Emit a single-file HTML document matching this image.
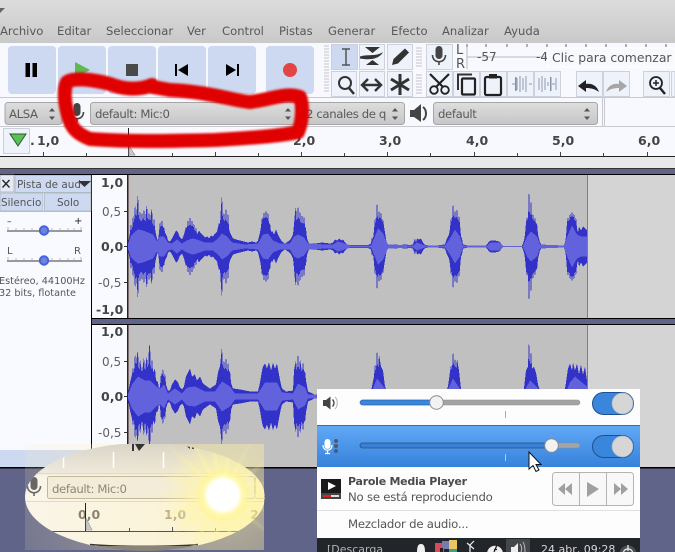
<!DOCTYPE html>
<html><head><meta charset="utf-8"><title>Audacity</title>
<style>
html,body{margin:0;padding:0;background:#fff;width:675px;height:552px;overflow:hidden}
svg{display:block}
#root{position:absolute;left:0;top:0}
text{font-family:"DejaVu Sans","Liberation Sans",sans-serif;font-size:12px;fill:#555;white-space:pre}
.n{font-size:11.6px;fill:#585858}
.b{font-weight:bold;fill:#444;font-size:12.5px}
.s{fill:#606060;font-size:12px}
.m{fill:#5a5a5a;font-size:11.700px;letter-spacing:-.38px}
.p{fill:#555;font-size:11.700px;letter-spacing:-.22px}
</style></head><body>
<svg id="root" width="675" height="552" viewBox="0 0 675 552" xmlns="http://www.w3.org/2000/svg">
<defs>
<linearGradient id="top" x1="0" y1="0" x2="0" y2="1"><stop offset="0" stop-color="#dcdcdc"/><stop offset="1" stop-color="#c9c9c9"/></linearGradient>
<linearGradient id="cb" x1="0" y1="0" x2="0" y2="1"><stop offset="0" stop-color="#dedede"/><stop offset="1" stop-color="#c6c6c6"/></linearGradient>
<linearGradient id="sel" x1="0" y1="0" x2="0" y2="1"><stop offset="0" stop-color="#62a8f6"/><stop offset="1" stop-color="#3683dc"/></linearGradient>
<linearGradient id="cream" x1="0" y1="0" x2="1" y2="0"><stop offset="0" stop-color="#faf5e8"/><stop offset=".6" stop-color="#fbf3d8"/><stop offset="1" stop-color="#fdf3b8"/></linearGradient>
<linearGradient id="creamtop" x1="0" y1="0" x2="0" y2="1"><stop offset="0" stop-color="#b8b4b4" stop-opacity=".5"/><stop offset=".28" stop-color="#cac6c0" stop-opacity=".25"/><stop offset=".32" stop-color="#fff" stop-opacity="0"/></linearGradient>
<radialGradient id="tint" gradientUnits="userSpaceOnUse" cx="223" cy="495" r="210"><stop offset="0" stop-color="#fff0a0" stop-opacity=".6"/><stop offset=".5" stop-color="#fff0b0" stop-opacity=".3"/><stop offset="1" stop-color="#f8e8c0" stop-opacity=".14"/></radialGradient>
<radialGradient id="ray" gradientUnits="userSpaceOnUse" cx="223" cy="495" r="90"><stop offset="0" stop-color="#fffbd0"/><stop offset=".45" stop-color="#fff4a0" stop-opacity=".55"/><stop offset="1" stop-color="#fff4a0" stop-opacity="0"/></radialGradient>
<radialGradient id="glow" gradientUnits="userSpaceOnUse" cx="223" cy="495" r="62"><stop offset="0" stop-color="#fff7a0" stop-opacity=".85"/><stop offset=".55" stop-color="#fff5a8" stop-opacity=".45"/><stop offset="1" stop-color="#fff5b8" stop-opacity="0"/></radialGradient>
<radialGradient id="core" gradientUnits="userSpaceOnUse" cx="223" cy="495" r="28"><stop offset="0" stop-color="#fff"/><stop offset=".55" stop-color="#fff"/><stop offset=".72" stop-color="#fff9a8" stop-opacity=".85"/><stop offset="1" stop-color="#ffef80" stop-opacity="0"/></radialGradient>
<filter id="bl" x="-10%" y="-10%" width="120%" height="120%"><feGaussianBlur stdDeviation="1.200"/></filter>
<filter id="bl2" x="-20%" y="-20%" width="140%" height="140%"><feGaussianBlur stdDeviation="1.100"/></filter>
<clipPath id="ell"><ellipse cx="145" cy="497" rx="120" ry="54"/></clipPath>
<clipPath id="box"><rect x="25" y="444" width="239" height="106"/></clipPath>
<polygon id="r" points="223,492.500 223,497.500 318,495" fill="url(#ray)"/>
<polygon id="r2" points="223,493.500 223,496.500 282,495" fill="url(#ray)"/>
<path id="d1" d="M128 -3 130 -14 131 -24 132 -15 133 -33 134 -22 135 -44 136 -28 137 -40 138 -54 139 -24 140 -38 141 -22 142 -36 143 -24 144 -40 145 -22 146 -36 147 -42 148 -24 149 -36 150 -24 151 -34 152 -38 153 -18 154 -30 155 -18 156 -12 157 -8 158 -6 159 -14 160 -26 161 -18 162 -28 163 -18 164 -20 165 -14 166 -12 167 -10 168 -6 170 -5 172 -8 174 -12 176 -16 178 -14 180 -9 182 -7 184 -12 186 -20 187 -18 188 -28 189 -18 190 -32 191 -18 192 -28 193 -18 194 -24 195 -14 196 -20 197 -12 199 -16 201 -13 203 -11 205 -9 207 -10 209 -8 211 -11 213 -10 215 -13 217 -15 219 -24 220 -22 221 -40 222 -52 223 -24 224 -36 225 -22 226 -42 227 -20 228 -36 229 -18 230 -14 231 -12 233 -8 236 -7 240 -6 244 -5 248 -4 252 -5 256 -4 258 -6 260 -14 261 -20 262 -30 263 -26 264 -36 265 -26 266 -38 267 -26 268 -36 269 -22 270 -24 271 -14 272 -16 274 -12 276 -17 278 -12 280 -8 282 -5 285 -3 288 -5 291 -8 293 -12 294 -22 295 -34 296 -40 297 -22 298 -44 299 -24 300 -38 301 -20 302 -34 303 -20 304 -32 305 -20 306 -18 307 -8 309 -3 315 -3 322 -4 330 -3 333 -4 335 -7 337 -6 339 -8 341 -6 343 -7 345 -4 347 -2 350 -1.500 368 -1.500 371 -3 372 -10 373 -7 374 -16 375 -30 376 -22 377 -48 378 -24 379 -38 380 -26 381 -36 382 -24 383 -28 384 -20 385 -14 386 -8 387 -3 389 -1 395 -2 400 -1.500 405 -2 410 -1.500 413 -2 415 -8 416 -4 417 -8 419 -7 421 -8 423 -4 425 -1.500 430 -1 437 -1 440 -1.500 445 -2 447 -8 449 -12 450 -18 451 -30 452 -24 453 -46 454 -26 455 -38 456 -26 457 -40 458 -24 459 -32 460 -22 461 -10 462 -8 463 -2 470 -.7 485 -.7 487 -2 489 -5 491 -6 495 -6 499 -5 501 -3 503 -.7 522 -.7 524 -6 525 -12 526 -24 527 -30 528 -26 529 -61 530 -26 531 -50 532 -26 533 -34 534 -24 535 -30 536 -22 537 -24 538 -12 540 -4 542 -1 564 -1 565 -4 566 -10 567 -24 568 -30 569 -24 570 -34 571 -28 572 -36 573 -28 574 -34 575 -24 576 -30 577 -18 578 -14 579 -20 581 -16 583 -20 585 -18 587 -16 587 0 128 0Z"/>
<path id="l1" d="M128 -2 131 -11 134 -14 138 -17 143 -16 148 -14 153 -12 157 -5 160 -10 164 -10 168 -4 172 -3 177 -7 182 -3 187 -6 192 -8 197 -7 205 -4 213 -4 218 -8 222 -13 227 -10 232 -4 245 -2 258 -3 263 -12 268 -13 273 -6 280 -3 290 -3 294 -10 298 -12 304 -9 308 -3 325 -2 333 -2 338 -5 345 -3 350 -1 371 -1 374 -8 378 -18 383 -13 388 -2 413 -1 417 -4 425 -1 445 -1 450 -8 455 -17 460 -10 463 -1 487 -1 490 -4 500 -4 503 -.5 523 -.5 527 -10 531 -15 537 -10 540 -2 564 -1 568 -12 572 -21 577 -12 581 -10 587 -10 587 0 128 0Z"/>
<path id="d2" d="M128 -3 130 -14 132 -22 133 -30 134 -22 135 -45 136 -30 137 -42 138 -45 139 -24 140 -38 142 -24 144 -40 145 -24 146 -36 147 -40 148 -26 149 -50 150 -52 151 -24 152 -40 153 -24 155 -28 156 -16 158 -14 159 -8 160 -10 161 -24 162 -20 163 -29 164 -18 165 -24 166 -12 168 -6 170 -6 172 -12 175 -17 178 -14 180 -9 182 -7 184 -10 186 -20 188 -24 190 -28 192 -20 195 -22 197 -16 200 -20 203 -13 207 -10 210 -8 213 -10 216 -12 218 -24 220 -30 221 -40 222 -50 223 -26 224 -38 225 -24 226 -42 227 -22 228 -36 229 -24 230 -26 231 -14 233 -8 240 -7 250 -5 258 -5 260 -14 262 -26 263 -30 265 -33 267 -28 269 -34 271 -26 273 -34 275 -28 277 -33 279 -22 281 -12 282 -8 286 -5 293 -6 294 -26 296 -36 297 -24 298 -46 299 -24 300 -38 302 -24 303 -36 304 -24 305 -26 306 -16 308 -5 317 -1 330 -2 345 -3 370 -2 372 -10 374 -20 375 -34 376 -24 377 -50 378 -26 379 -42 381 -30 383 -26 385 -10 388 -2 445 -2 448 -10 451 -32 452 -26 453 -48 454 -28 455 -40 456 -26 457 -38 459 -26 461 -8 464 -2 522 -2 524 -8 526 -26 528 -30 529 -59 530 -28 531 -48 532 -28 534 -30 536 -24 538 -12 541 -2 564 -2 566 -14 568 -28 570 -33 572 -26 573 -34 575 -26 577 -33 579 -22 581 -32 583 -22 585 -30 587 -16 587 0 128 0Z"/>
<path id="l2" d="M128 -2 132 -12 138 -20 145 -16 150 -16 156 -10 160 -8 164 -12 168 -3 175 -8 182 -3 187 -9 195 -10 205 -5 215 -5 222 -15 230 -10 235 -3 258 -3 265 -14 277 -14 282 -4 293 -3 298 -13 305 -9 308 -2 370 -1 377 -18 385 -8 388 -1 445 -1 453 -18 461 -6 464 -1 522 -1 530 -16 538 -8 541 -1 564 -1 570 -14 575 -20 582 -14 587 -10 587 0 128 0Z"/>
<g id="ud"><path d="M0 -2.500 3 -6 6 -2.500Z M0 2.500 3 6 6 2.500Z" fill="#555"/></g>
<g id="mic"><rect x="-3.500" y="-10" width="7" height="13" rx="3.500" fill="#444"/><path d="M-6.500 -1 C-6.500 8 6.500 8 6.500 -1" fill="none" stroke="#444" stroke-width="1.600"/><rect x="-.8" y="5" width="1.600" height="4" fill="#444"/></g>
<g id="tog"><rect x=".5" y=".5" width="41" height="22" rx="11" fill="#3a86dc" stroke="#1c5190"/><circle cx="30.500" cy="11.500" r="10.500" fill="#d6d6d6" stroke="#a8b4c4" stroke-width=".7"/></g>
</defs>

<!-- window background -->
<rect width="675" height="552" fill="#f8f9ff"/>
<rect width="675" height="43" fill="url(#top)"/>
<path d="M0 8 5 8 0 13Z" fill="#666"/>
<!-- menu -->
<text class="n" x="0" y="35">Archivo</text><text class="n" x="57" y="35">Editar</text><text class="n" x="106" y="35">Seleccionar</text><text class="n" x="187" y="35">Ver</text><text class="n" x="222" y="35">Control</text><text class="n" x="279" y="35">Pistas</text><text class="n" x="328" y="35">Generar</text><text class="n" x="391" y="35">Efecto</text><text class="n" x="442" y="35">Analizar</text><text class="n" x="504" y="35">Ayuda</text>

<!-- transport -->
<g fill="#ccd9f0">
<rect x="8" y="46" width="48" height="48" rx="4"/><rect x="58" y="46" width="48" height="48" rx="4"/><rect x="108" y="46" width="48" height="48" rx="4"/><rect x="158" y="46" width="48" height="48" rx="4"/><rect x="208" y="46" width="48" height="48" rx="4"/><rect x="266" y="46" width="48" height="48" rx="4"/>
</g>
<rect x="25.500" y="63" width="4.500" height="14" fill="#000"/><rect x="32.500" y="63" width="4.500" height="14" fill="#000"/>
<path d="M75 62 90 70 75 78Z" fill="#5fb94f"/>
<rect x="126" y="64" width="12" height="12" fill="#4a4a4a"/>
<rect x="175" y="64" width="2" height="12" fill="#000"/><path d="M188 64 178 70 188 76Z" fill="#000"/>
<path d="M226 64 236 70 226 76Z" fill="#000"/><rect x="237" y="64" width="2" height="12" fill="#000"/>
<circle cx="290" cy="70" r="7" fill="#e14545"/>
<path d="M324 46h5M324 49h5M324 52h5M324 55h5M324 58h5M324 61h5M324 64h5M324 67h5M324 70h5M324 73h5M324 76h5M324 79h5M324 82h5M324 85h5M324 88h5M324 91h5" stroke="#c4c4c8"/>

<!-- tool buttons -->
<g fill="#eef2fb" stroke="#c4c8d2" stroke-width=".8">
<rect x="331.500" y="44.500" width="26" height="25" fill="#ccd9f0"/><rect x="359.500" y="44.500" width="25" height="25"/><rect x="387.500" y="44.500" width="25" height="25"/><rect x="426.500" y="44.500" width="26" height="25"/>
<rect x="331.500" y="71.500" width="25" height="25"/><rect x="359.500" y="71.500" width="25" height="25"/><rect x="387.500" y="71.500" width="25" height="25"/><rect x="426.500" y="71.500" width="26" height="25"/><rect x="453.500" y="71.500" width="26" height="25"/><rect x="480.500" y="71.500" width="26" height="25"/><rect x="507.500" y="71.500" width="26" height="25"/><rect x="534.500" y="71.500" width="26" height="25"/><rect x="576.500" y="71.500" width="26" height="25"/><rect x="603.500" y="71.500" width="26" height="25"/><rect x="643.500" y="71.500" width="26" height="25"/><rect x="671.500" y="71.500" width="3.500" height="25"/>
</g>
<path d="M416 48h6M416 51h6M416 54h6M416 57h6M416 60h6M416 63h6M416 66h6M416 75h6M416 78h6M416 81h6M416 84h6M416 87h6M416 90h6M416 93h6" stroke="#c4c4c8"/>
<!-- I tool -->
<path d="M342 49h8M342 65h8M346 49v16" stroke="#555" stroke-width="1.500" fill="none"/>
<!-- envelope -->
<path d="M365 47 380 47 372.500 53Z M366 65 379 65 372.500 60Z" fill="#333"/><path d="M360 56.500C368 54 376 57 383 52C379 60 368 60 360 58.500Z" fill="#333"/>
<!-- pencil -->
<path d="M392 65 393.500 59 405 48.500 409 52.500 398 63.500Z" fill="#333"/>
<!-- mic -->
<use href="#mic" transform="translate(439,56)"/>
<!-- magnifier -->
<circle cx="345" cy="83" r="6" fill="none" stroke="#333" stroke-width="2"/><path d="M349 88 354 94" stroke="#333" stroke-width="2.500"/>
<!-- arrows -->
<path d="M362 85H381" stroke="#333" stroke-width="2.500"/><path d="M368 79 362 85 368 91M375 79 381 85 375 91" stroke="#333" stroke-width="2.400" fill="none"/>
<!-- star -->
<path d="M400 74V95M391 79 409 90M391 90 409 79" stroke="#333" stroke-width="3"/>
<!-- scissors -->
<circle cx="434" cy="90" r="3.800" fill="none" stroke="#222" stroke-width="1.800"/><circle cx="445" cy="90" r="3.800" fill="none" stroke="#222" stroke-width="1.800"/><path d="M436 87 449 74M443 87 430 74" stroke="#222" stroke-width="2.200"/>
<!-- copy -->
<path d="M458 90V74.500H472" fill="none" stroke="#333" stroke-width="2"/><rect x="462" y="78.500" width="13" height="16" rx="1" fill="none" stroke="#222" stroke-width="2.200"/>
<!-- paste -->
<rect x="485" y="77" width="16" height="18" rx="1.500" fill="none" stroke="#222" stroke-width="2.200"/><rect x="489" y="74" width="8" height="4.500" fill="#222"/>
<!-- trim / silence -->
<path d="M512 84H516M529 84H532M517 78v12M520 76v16M523 78v12M526 76v16" stroke="#a0a8bc" stroke-width="1.200" fill="none"/><rect x="515" y="77" width="1.500" height="14" fill="#8a92a8"/>
<path d="M539 78v12M542 76v16M545 78v12M548 82v4M552 84H555M556 78v12" stroke="#a0a8bc" stroke-width="1.200" fill="none"/><rect x="550" y="77" width="1.500" height="14" fill="#8a92a8"/>
<!-- undo/redo -->
<path d="M578 86 586 80V84C592 83 597 86 599 92C595 89 591 88 586 88V92Z" fill="#222"/>
<path d="M578 86 586 80V84C592 83 597 86 599 92C595 89 591 88 586 88V92Z" fill="#a6a6a6" transform="translate(1205,0) scale(-1,1)"/>
<!-- zoom in -->
<circle cx="656" cy="83" r="6" fill="none" stroke="#222" stroke-width="1.800"/><path d="M653 83H659M656 80V86" stroke="#222" stroke-width="1.500"/><path d="M660 88 665 94" stroke="#222" stroke-width="2.400"/>

<!-- meter -->
<text x="456" y="54" style="font-size:13px">L</text><text x="456" y="68" style="font-size:13px">R</text>
<path d="M467 44V69M467 57H549" stroke="#bbb" fill="none"/><path d="M467 44V47M486 44V47M507 44V47M527 44V47M547 44V47M566 44V47M586 44V47M606 44V47M626 44V47M646 44V47M666 44V47" stroke="#666"/>
<text x="477" y="61" style="font-size:12px">-57</text><text x="536" y="61">-4</text>
<rect x="547.500" y="48" width="127.500" height="19" fill="#f8f9ff" stroke="#fff"/>
<text x="552" y="62" style="font-size:12.400px">Clic para comenzar</text>

<!-- device toolbar -->
<path d="M0 97.500H675M0 126.500H675" stroke="#c8c8d0"/>
<g fill="url(#cb)" stroke="#a6a6a6"><rect x="5" y="102.500" width="57" height="22" rx="3"/><rect x="90.500" y="102.500" width="206" height="22" rx="3"/><rect x="304.500" y="102.500" width="100" height="22" rx="3"/><rect x="433.500" y="102.500" width="164" height="22" rx="3"/></g>
<text x="9" y="118" class="m">ALSA</text><text x="95" y="118" class="m">default: Mic:0</text>
<text x="306" y="118" class="m">2 canales de q</text><text x="438" y="118" class="m">default</text>
<use href="#ud" transform="translate(49,114)"/><use href="#ud" transform="translate(285,114)"/><use href="#ud" transform="translate(392,114)"/><use href="#ud" transform="translate(584,114)"/>
<use href="#mic" transform="translate(77,113)"/>
<path d="M410 110H414L421 104V122L414 117H410Z" fill="#444"/><path d="M423 107C427 110 427 117 423 120" fill="none" stroke="#444" stroke-width="2"/>
<path d="M602.500 98V126M604.500 98V126" stroke="#c8c8d0"/>

<!-- ruler -->
<rect x="3.500" y="128.500" width="26" height="25" fill="#eef2fb" stroke="#ccd0da"/>
<path d="M10 134H26L18 146Z" fill="#5cc05a" stroke="#2c5a2c"/>
<text x="30" y="145" class="b">.</text>
<text x="37" y="145" class="b">1,0</text><text x="293" y="145" class="b">2,0</text><text x="379" y="145" class="b">3,0</text><text x="466" y="145" class="b">4,0</text><text x="552" y="145" class="b">5,0</text><text x="638" y="145" class="b">6,0</text>
<path d="M0 156.500H675" stroke="#222" stroke-width="1"/>
<path d="M43.500 152V156M86.500 153V156M172.500 153V156M215.500 152V156M258.500 153V156M301.500 152V156M344.500 153V156M387.500 152V156M430.500 153V156M474.500 152V156M517.500 153V156M560.500 152V156M603.500 153V156M647.500 152V156" stroke="#444"/>
<path d="M128.500 128V156" stroke="#222"/><path d="M129 146 135 155H129Z" fill="#ccc" stroke="#999" stroke-width=".7"/>

<rect y="157" width="675" height="11" fill="#e8e8ea"/>
<rect y="168" width="675" height="1" fill="#333"/>
<rect y="169" width="675" height="6" fill="#606488"/>
<rect y="174" width="675" height="1" fill="#000"/>

<!-- left panel -->
<rect x="0" y="175" width="91" height="275" fill="#f9faff"/>
<rect x="91" y="175" width="1" height="275" fill="#000"/>
<rect x="92" y="175" width="35" height="143" fill="#f9faff"/>
<rect x="92" y="325" width="35" height="125" fill="#f9faff"/>
<rect x="0" y="175" width="14" height="17" fill="#e4e9f5" stroke="#99a" stroke-width=".6"/>
<path d="M2.500 180 9.500 187.500M9.500 180 2.500 187.500" stroke="#222" stroke-width="1.300"/>
<rect x="15" y="175.500" width="76" height="17" fill="#ccd9f0" stroke="#9aa" stroke-width=".6"/>
<text x="17" y="188" style="font-size:10.400px">Pista de aud</text>
<path d="M78 181H91L84.500 187Z" fill="#333"/>
<rect x="0" y="193" width="43" height="18" fill="#ccd9f0" stroke="#9aa" stroke-width=".6"/><rect x="44.500" y="193" width="46.500" height="18" fill="#ccd9f0" stroke="#9aa" stroke-width=".6"/>
<text x="1" y="206" style="font-size:10.400px">Silencio</text><text x="57" y="206" style="font-size:10.400px">Solo</text>
<path d="M0 211.500H91" stroke="#999" stroke-width=".6"/>
<text x="7" y="224" style="font-size:9px;fill:#222">–</text><text x="74" y="224" style="font-size:10px;fill:#222">+</text>
<text x="7" y="254" style="font-size:10px">L</text><text x="74" y="254" style="font-size:10px">R</text>
<rect x="7" y="230" width="75" height="2" fill="#999"/><rect x="7" y="260" width="75" height="2" fill="#999"/>
<path d="M8 227V230M16 228V230M24 228V230M32 228V230M52 228V230M60 228V230M68 228V230M74 228V230M81 227V230M8 257V260M16 258V260M24 258V260M32 258V260M52 258V260M60 258V260M68 258V260M74 258V260M81 257V260" stroke="#aaa" stroke-width=".8"/>
<circle cx="44" cy="230.500" r="4.200" fill="#6a86d8" stroke="#4a60e0" stroke-width="2"/>
<circle cx="44" cy="260.500" r="4.200" fill="#6a86d8" stroke="#4a60e0" stroke-width="2"/>
<text x="-1" y="284" style="font-size:9.700px">Estéreo, 44100Hz</text><text x="-1" y="296" style="font-size:9.700px">32 bits, flotante</text>

<!-- vertical scale -->
<text x="101" y="187" class="b">1,0</text><text x="102" y="216" class="s">0,5</text><text x="101" y="251" class="b">0,0</text><text x="98" y="287" class="s">-0,5</text><text x="96" y="314" class="b">-1,0</text>
<text x="101" y="336" class="b">1,0</text><text x="102" y="366" class="s">0,5</text><text x="101" y="401" class="b">0,0</text><text x="98" y="437" class="s">-0,5</text>
<path d="M124 211.500H127M124 246.500H127M124 282.500H127M124 361.500H127M124 396.500H127M124 432.500H127" stroke="#333"/>

<!-- tracks -->
<rect x="128" y="175" width="547" height="143" fill="#d4d4d4"/>
<rect x="128" y="175" width="459" height="143" fill="#c0c0c0"/>
<rect x="587" y="175" width="1" height="143" fill="#808080"/>
<rect x="128" y="325" width="547" height="142" fill="#d4d4d4"/>
<rect x="128" y="325" width="459" height="142" fill="#c0c0c0"/>
<rect x="587" y="325" width="1" height="142" fill="#808080"/>
<rect x="127" y="175" width="1.500" height="143" fill="#3a1a1a"/><rect x="127" y="325" width="1.500" height="142" fill="#3a1a1a"/>
<rect x="92" y="318" width="583" height="1" fill="#000"/>
<rect x="92" y="319" width="583" height="5" fill="#606488"/>
<rect x="92" y="324" width="583" height="1" fill="#000"/>
<g transform="translate(0,246.500)" shape-rendering="crispEdges"><use href="#d1" fill="#3232c8"/><use href="#d1" fill="#3232c8" transform="scale(1,-1)"/><use href="#l1" fill="#6262dc"/><use href="#l1" fill="#6262dc" transform="scale(1,-1)"/></g>
<g transform="translate(0,396.500)" shape-rendering="crispEdges"><use href="#d2" fill="#3232c8"/><use href="#d2" fill="#3232c8" transform="scale(1,-1)"/><use href="#l2" fill="#6262dc"/><use href="#l2" fill="#6262dc" transform="scale(1,-1)"/></g>
<rect x="0" y="450" width="128" height="17" fill="#ccd9f0"/>

<!-- bottom dark -->
<rect x="0" y="467" width="675" height="1.500" fill="#000"/>
<rect x="0" y="468.500" width="675" height="83.500" fill="#606488"/>

<!-- sun / spotlight -->
<rect x="25" y="444" width="239" height="106" fill="url(#tint)"/>
<g clip-path="url(#box)" opacity=".45" filter="url(#bl)">
<use href="#r" transform="rotate(-38 223 495)"/><use href="#r" transform="rotate(-62 223 495)"/><use href="#r" transform="rotate(40 223 495)"/><use href="#r" transform="rotate(-16 223 495)"/><use href="#r" transform="rotate(20 223 495)"/>
</g>
<g clip-path="url(#ell)">
<rect x="25" y="444" width="239" height="106" fill="url(#cream)"/>
<rect x="25" y="444" width="239" height="106" fill="url(#creamtop)"/>
<!-- ghost toolbar -->
<path d="M63.500 452V468M113.500 452V468M163.500 452V468" stroke="#fff" stroke-width="1.500"/>
<path d="M132 444V451H134V444ZM135 444 145 444 139 451Z" fill="#333"/><path d="M184 444 190 449V444ZM192 444V449H194V444Z" fill="#333"/>
<path d="M28 463H40L34 457Z" fill="#5a5040"/>
<path d="M25 473.500H264M25 501.500H264" stroke="#e2dac2"/>
<rect x="47.500" y="476.500" width="207" height="22" rx="2" fill="#f3ecd8" stroke="#c4b89a"/>
<rect x="255.500" y="476.500" width="12" height="22" rx="2" fill="none" stroke="#d8c898"/>
<text x="52" y="493" class="m" style="fill:#8c8778">default: Mic:0</text>
<use href="#mic" transform="translate(34,487)" opacity=".8"/>
<text x="78" y="519" class="b" style="fill:#8c8272">0,0</text><text x="164" y="519" class="b" style="fill:#b8a880">1,0</text><text x="250" y="519" class="b" style="fill:#c0a870">2</text>
<path d="M85.500 503V531" stroke="#222"/><path d="M86 518 92 530H86Z" fill="#c8c8c8" stroke="#999" stroke-width=".6"/>
<path d="M25 531.500H264" stroke="#5a5040"/>
<path d="M129.500 528V531M172.500 527V531M215.500 528V531" stroke="#555"/>
<path d="M90 544.500C120 547 170 547 198 544.500" stroke="#3a3430" stroke-width="1.500" fill="none"/>
<rect x="90" y="546" width="108" height="5" fill="#8a8478"/>
<circle cx="223" cy="495" r="62" fill="url(#glow)"/>
<g filter="url(#bl)">
<use href="#r" transform="rotate(180 223 495)"/><use href="#r" transform="rotate(160 223 495)"/><use href="#r" transform="rotate(200 223 495)"/><use href="#r" transform="rotate(142 223 495)"/><use href="#r" transform="rotate(222 223 495)"/><use href="#r2" transform="rotate(172 223 495)"/><use href="#r2" transform="rotate(190 223 495)"/><use href="#r2" transform="rotate(150 223 495)"/><use href="#r2" transform="rotate(212 223 495)"/>
<use href="#r" transform="rotate(120 223 495)"/><use href="#r" transform="rotate(100 223 495)"/><use href="#r" transform="rotate(80 223 495)"/><use href="#r" transform="rotate(60 223 495)"/><use href="#r" transform="rotate(40 223 495)"/><use href="#r" transform="rotate(20 223 495)"/><use href="#r" transform="rotate(0 223 495)"/><use href="#r" transform="rotate(-20 223 495)"/><use href="#r" transform="rotate(-40 223 495)"/><use href="#r" transform="rotate(-62 223 495)"/><use href="#r" transform="rotate(-82 223 495)"/><use href="#r" transform="rotate(-102 223 495)"/><use href="#r" transform="rotate(-120 223 495)"/>
<use href="#r2" transform="rotate(110 223 495)"/><use href="#r2" transform="rotate(70 223 495)"/><use href="#r2" transform="rotate(30 223 495)"/><use href="#r2" transform="rotate(-10 223 495)"/><use href="#r2" transform="rotate(-50 223 495)"/><use href="#r2" transform="rotate(-92 223 495)"/>
</g>
</g>
<circle cx="223" cy="495" r="28" fill="url(#core)"/>

<!-- popup -->
<rect x="317" y="389" width="323" height="149" fill="#fdfdfd"/>
<path d="M323 400H326L330.500 396.500V409.500L326 406H323Z" fill="#444"/><path d="M332.500 399.500C334.500 401.500 334.500 404.500 332.500 406.500" stroke="#444" stroke-width="1.300" fill="none"/><path d="M335 397C338 400 338 406 335 409" stroke="#b8b8b8" stroke-width="1.100" fill="none"/>
<rect x="360" y="400" width="220" height="5" rx="2.500" fill="#a4a4a4" stroke="#8a8a8a" stroke-width=".5"/>
<rect x="360" y="400" width="76" height="5" rx="2.500" fill="#3a86dc" stroke="#1c5190" stroke-width=".5"/>
<circle cx="436.500" cy="402.500" r="6.800" fill="#f2f2f2" stroke="#8c8c8c"/>
<rect x="505" y="411" width="1" height="7" fill="#aaa"/>
<use href="#tog" transform="translate(592,392)"/>
<rect x="317" y="425" width="323" height="42" fill="url(#sel)"/>
<rect x="317" y="425" width="323" height="1" fill="#2f6fb8"/>
<rect x="324.500" y="439" width="6" height="10" rx="3" fill="#fff"/><path d="M323 445C323 452 332 452 332 445" fill="none" stroke="#fff" stroke-width="1.200"/><path d="M327.500 451V453M325 453.500H330" stroke="#fff" stroke-width="1.300"/>
<circle cx="336" cy="441" r="2" fill="#4a5a70"/><circle cx="336" cy="446" r="2" fill="#4a5a70"/><circle cx="336" cy="451" r="2" fill="#4a5a70"/>
<rect x="360" y="443" width="220" height="5" rx="2.500" fill="#a4a4a4" stroke="#8a8a8a" stroke-width=".5"/>
<rect x="360" y="443" width="192" height="5" rx="2.500" fill="#3a80d4" stroke="#1c5190" stroke-width=".8"/>
<circle cx="551.500" cy="445.500" r="6.800" fill="#f2f2f2" stroke="#8c8c8c"/>
<rect x="505" y="454" width="1" height="7" fill="#a8ccf4"/>
<use href="#tog" transform="translate(592,435)"/>
<!-- parole -->
<rect x="321" y="479" width="20" height="20" fill="#f0f0f0"/><rect x="321" y="479" width="20" height="14" fill="#1a1a1a"/><rect x="321" y="493" width="20" height="6" fill="#444"/><rect x="323" y="495" width="8" height="2" fill="#e02020"/><rect x="331" y="495" width="8" height="2" fill="#ddd"/><path d="M328 482 336 486 328 490Z" fill="#fff"/>
<text x="348" y="485" style="font-size:11px;font-weight:bold;fill:#4a4a4a;letter-spacing:-.25px">Parole Media Player</text>
<text x="348" y="501" class="p">No se está reproduciendo</text>
<rect x="552.500" y="472.500" width="81" height="33" rx="3" fill="#f8f8f8" stroke="#b4b4b4"/>
<path d="M579.500 473V505M606.500 473V505" stroke="#b4b4b4"/>
<path d="M565 483V495L558 489ZM572 483V495L565 489Z" fill="#a0a0a0"/>
<path d="M587 482 599 489 587 497Z" fill="#a0a0a0"/>
<path d="M614 483 621 489 614 495ZM621 483 628 489 621 495Z" fill="#a0a0a0"/>
<path d="M317 510.500H640" stroke="#e0e0e0"/>
<text x="348" y="528" class="p">Mezclador de audio...</text>
<!-- panel (clipped at window edge) -->
<svg x="317" y="538" width="323" height="14" viewBox="317 538 323 14" overflow="hidden">
<rect x="317" y="538" width="323" height="14" fill="#22252a"/>
<text x="327" y="553" style="font-size:11px;fill:#b4b4b4">[Descarga</text>
<path d="M417 552C417 545 419 544 421 544C423 544 425 545 425 552Z" fill="#eee"/>
<rect x="435" y="543" width="9" height="9" fill="#d84a5a"/><rect x="449" y="540" width="8" height="9" fill="#e8c860"/><rect x="442" y="541" width="7" height="8" fill="#7a7ab0"/><rect x="449" y="549" width="8" height="3" fill="#40a090"/><rect x="440" y="548" width="3" height="4" fill="#222"/>
<path d="M467 543 474 549M474 541 470 545V552" stroke="#eee" stroke-width="1.200" fill="none"/>
<path d="M487.200 552A8 8 0 0 1 502.800 552Z" fill="#eee"/><path d="M497 545 494 552M494 549.500H497" stroke="#222" stroke-width="1.300" fill="none"/>
<rect x="506" y="539" width="24" height="13" fill="#44474c"/>
<path d="M511 547H514L518 543V552H511Z" fill="#eee"/><path d="M520 544C522 546 522 550 521 552M523 542C525 545 525 549 525 552" stroke="#bbb" fill="none"/>
<text x="541" y="553" style="font-size:11px;fill:#d8d8d8">24 abr, 09:28</text>
<path d="M619.700 552A8.500 8.500 0 0 1 636.300 552Z" fill="#4a4d52"/><path d="M628 545V551" stroke="#e8e8e8" stroke-width="1.300"/><path d="M623.400 552A5 5 0 0 1 632.600 552" fill="none" stroke="#e8e8e8" stroke-width="1.300"/>
</svg>
<!-- cursor -->
<path d="M529 452V469L533 465.500 536 471.500 539 470 536 464.500H541Z" fill="#fff" stroke="#111" stroke-width="1"/>

<!-- red scribble -->
<path filter="url(#bl2)" d="M152 85C140 90 125 90 110 84C95 80 75 77 67 82C63 90 65 105 68 115C71 128 77 134 90 139C130 142 170 141 215 140C250 138 280 136 298 132C303 120 303 105 300 97C285 92 270 100 250 102C230 100 210 92 170 90L153 87" fill="none" stroke="#e00000" stroke-width="14" stroke-linejoin="round" stroke-linecap="round"/>
</svg>
</body></html>
